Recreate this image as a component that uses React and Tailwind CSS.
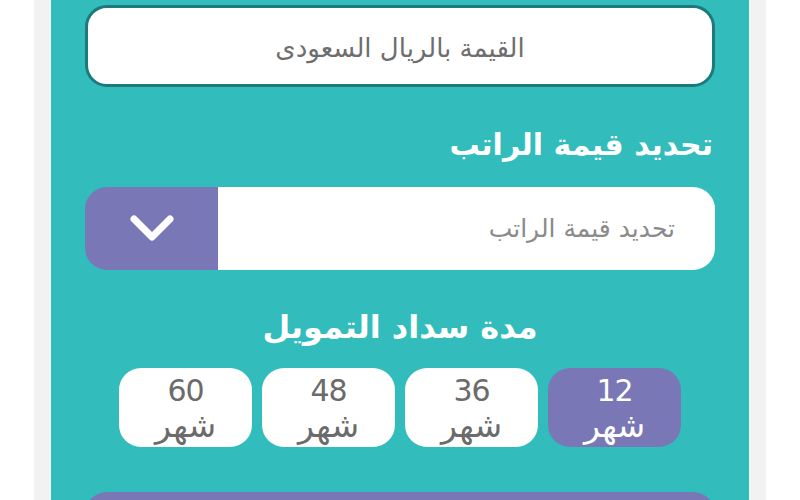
import React from "react";

const font = { fontFamily: '"DejaVu Sans", "Noto Sans", sans-serif' };

function Chip({ n, active }) {
  return (
    <div
      className={
        "w-[133px] h-[79px] rounded-[22px] flex flex-col items-center justify-center " +
        (active ? "bg-[#7a77b7] text-white" : "bg-white text-[#6b6b6b]")
      }
    >
      <span className="text-[30px] leading-[33px] tracking-[-1px] pt-[3px]">{n}</span>
      <span className="text-[33px] leading-[38px]">شهر</span>
    </div>
  );
}

export default function App() {
  return (
    <div className="w-[800px] h-[500px] bg-white flex justify-center overflow-hidden" style={font}>
      <div className="w-[732px] h-full bg-[#f2f2f2] flex justify-center">
        <div dir="rtl" className="w-[698px] h-full bg-[#33bcbc] px-[34px] pt-[5px] flex flex-col">
          <div className="h-[82px] shrink-0 rounded-[22px] border-[3px] border-[#1d7a7a] bg-white flex items-center justify-center pt-[4px] text-[26px] text-[#6e6e6e]">
            القيمة بالريال السعودى
          </div>
          <div className="mt-[38px] h-[38px] flex items-center text-[30px] font-bold text-white pr-[2px]">
            تحديد قيمة الراتب
          </div>
          <div className="mt-[24px] h-[83px] shrink-0 rounded-[22px] overflow-hidden flex">
            <div className="flex-1 bg-white flex items-center pr-[40px] text-[25px] text-[#8a8a8a]">
              تحديد قيمة الراتب
            </div>
            <div className="w-[133px] bg-[#7a77b7] flex items-center justify-center">
              <svg width="44" height="30" viewBox="0 0 44 30">
                <path d="M4 5 L22 23 L40 5" fill="none" stroke="white" strokeWidth="7" strokeLinecap="round" strokeLinejoin="round" />
              </svg>
            </div>
          </div>
          <div className="mt-[38px] h-[38px] flex items-center justify-center text-[32px] font-bold text-white">
            مدة سداد التمويل
          </div>
          <div className="mt-[22px] flex justify-center gap-[10px]">
            <Chip n="12" active />
            <Chip n="36" />
            <Chip n="48" />
            <Chip n="60" />
          </div>
          <div className="mt-[45px] h-[60px] shrink-0 rounded-[22px] bg-[#7a77b7]" />
        </div>
      </div>
    </div>
  );
}
